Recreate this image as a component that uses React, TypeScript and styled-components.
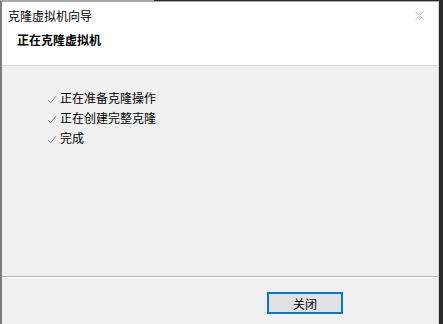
import * as React from 'react';
import styled, { createGlobalStyle } from 'styled-components';

const GlobalStyle = createGlobalStyle`
  html, body {
    margin: 0;
    padding: 0;
    background: #2b2b2b;
    font-family: 'Microsoft YaHei', 'Noto Sans CJK SC', 'Noto Sans', sans-serif;
  }
`;

const steps = ['正在准备克隆操作', '正在创建完整克隆', '完成'];

const Check = () => (
  <svg width="10" height="9" viewBox="0 0 10 9">
    <path d="M1 5 L3.6 7.8 L9 1.2" fill="none" stroke="#7a7a7a" strokeWidth="1" />
  </svg>
);

const CloseGlyph = () => (
  <svg width="9" height="9" viewBox="0 0 9 9">
    <path d="M0.5 0.5 L8.5 8.5 M8.5 0.5 L0.5 8.5" stroke="#c8c8c8" strokeWidth="1" />
  </svg>
);

export default function App() {
  return (
    <>
      <GlobalStyle />
      <Screen>
        <TopEdge>
          <TopEdgeLit />
        </TopEdge>
        <Window>
          <Header>
            <TitleBar>
              <Title>克隆虚拟机向导</Title>
              <CloseButton>
                <CloseGlyph />
              </CloseButton>
            </TitleBar>
            <Heading>正在克隆虚拟机</Heading>
          </Header>
          <Body>
            <StepList>
              {steps.map(step => (
                <Step key={step}>
                  <Check />
                  <span>{step}</span>
                </Step>
              ))}
            </StepList>
          </Body>
          <Footer>
            <Button>关闭</Button>
          </Footer>
        </Window>
      </Screen>
    </>
  );
}

const Screen = styled.div`
  width: 443px;
  height: 324px;
  display: flex;
  flex-direction: column;
  overflow: hidden;
`;

const TopEdge = styled.div`
  height: 1px;
  display: flex;
`;

const TopEdgeLit = styled.div`
  width: 154px;
  background: #a8a8a8;
`;

const Window = styled.div`
  width: 439px;
  flex: 1;
  box-sizing: border-box;
  border-left: 2px solid #7c7c7c;
  border-right: 1px solid #d4d4d4;
  background: #f0f0f0;
  display: flex;
  flex-direction: column;
`;

const Header = styled.div`
  background: #fff;
  height: 63px;
  border-bottom: 1px solid #d6d6d6;
  border-top: 1px solid #a8a8a8;
  box-sizing: content-box;
`;

const TitleBar = styled.div`
  height: 26px;
  display: flex;
  align-items: center;
  justify-content: space-between;
  padding: 0 14px 0 6px;
`;

const Title = styled.div`
  font-size: 12px;
  color: #000;
`;

const CloseButton = styled.div`
  display: flex;
  align-items: center;
`;

const Heading = styled.div`
  font-size: 12px;
  font-weight: bold;
  color: #000;
  padding: 3px 0 0 15px;
`;

const Body = styled.div`
  flex: 1;
  border-bottom: 1px solid #b9b9b9;
  padding: 23px 0 0 45px;
`;

const StepList = styled.div`
  display: flex;
  flex-direction: column;
  gap: 3px;
`;

const Step = styled.div`
  display: flex;
  align-items: center;
  gap: 3px;
  height: 17px;
  font-size: 12px;
  color: #000;

  svg {
    margin-top: 3px;
  }
`;

const Footer = styled.div`
  height: 47px;
  box-sizing: border-box;
  border-top: 1px solid #fff;
  display: flex;
  align-items: flex-start;
  padding: 14px 0 0 265px;
`;

const Button = styled.button`
  width: 76px;
  height: 22px;
  border: 2px solid #0078d7;
  background: #e1e1e1;
  font-family: 'Microsoft YaHei', 'Noto Sans CJK SC', sans-serif;
  font-size: 12px;
  color: #000;
  padding: 0;
`;
